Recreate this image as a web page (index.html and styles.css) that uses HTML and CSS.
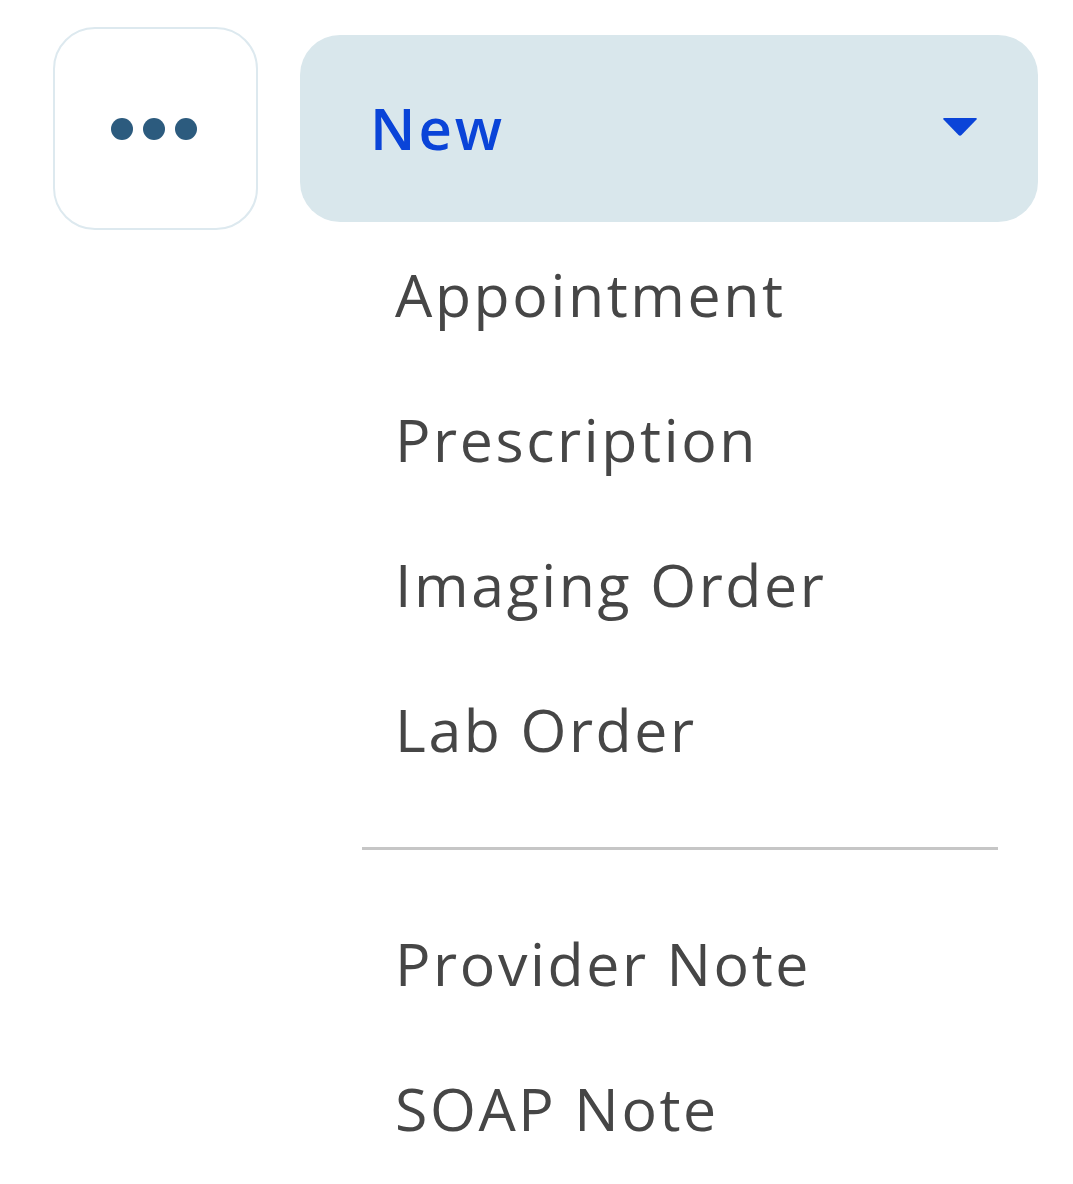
FILE: index.html
```html
<!DOCTYPE html>
<html lang="en">
<head>
<meta charset="utf-8">
<title>New menu</title>
<link rel="stylesheet" href="styles.css">
</head>
<body>
<div class="toolbar">
  <button class="more" type="button" aria-label="More actions">
    <span class="dot"></span><span class="dot"></span><span class="dot"></span>
  </button>
  <div class="dropdown">
    <button class="new" type="button">
      <span class="new-label">New</span>
      <svg class="caret" width="36" height="20" viewBox="0 0 36 20" aria-hidden="true">
        <path d="M2 1 H34 Q35.5 1 34.5 2.5 L19.5 18 Q18 19.5 16.5 18 L1.5 2.5 Q0.5 1 2 1 Z" fill="#0a44d8"/>
      </svg>
    </button>
    <div class="menu">
      <ul class="menu-group">
        <li class="menu-item">Appointment</li>
        <li class="menu-item">Prescription</li>
        <li class="menu-item">Imaging Order</li>
        <li class="menu-item">Lab Order</li>
      </ul>
      <hr class="divider">
      <ul class="menu-group">
        <li class="menu-item">Provider Note</li>
        <li class="menu-item">SOAP Note</li>
      </ul>
    </div>
  </div>
</div>
</body>
</html>
```
FILE: styles.css
```css
html, body {
  margin: 0;
  padding: 0;
  background: #ffffff;
}

body {
  font-family: "Open Sans", "Liberation Sans", sans-serif;
}

.toolbar {
  display: flex;
  align-items: flex-start;
  gap: 42px;
  padding: 27px 0 0 53px;
}

.more {
  box-sizing: border-box;
  width: 205px;
  height: 203px;
  border: 2px solid #dde9ef;
  border-radius: 42px;
  background: #ffffff;
  display: flex;
  align-items: center;
  justify-content: center;
  gap: 10px;
  padding: 0 3px 0 0;
  margin: 0;
}

.dot {
  width: 22px;
  height: 22px;
  border-radius: 50%;
  background: #2c5b7e;
}

.dropdown {
  display: flex;
  flex-direction: column;
  margin-top: 8px;
}

.new {
  box-sizing: border-box;
  width: 738px;
  height: 187px;
  border: none;
  border-radius: 40px;
  background: #d9e7ec;
  display: flex;
  align-items: center;
  justify-content: space-between;
  padding: 0 60px 0 70px;
  margin: 0;
  font-family: "Open Sans", "Liberation Sans", sans-serif;
}

.new-label {
  font-size: 58px;
  font-weight: 600;
  color: #0a44d8;
  letter-spacing: 3px;
  line-height: 1;
  padding-bottom: 2px;
}

.caret {
  display: block;
  margin-bottom: 4px;
}

.menu {
  margin-left: 62px;
  width: 636px;
}

.menu-group {
  list-style: none;
  margin: 0;
  padding: 0;
}

.menu-item {
  font-size: 59px;
  line-height: 145px;
  color: #464646;
  padding-left: 33px;
  letter-spacing: 2.6px;
}

.divider {
  border: none;
  height: 3px;
  background: #c6c6c6;
  margin: 45px 0 41px 0;
}
```
